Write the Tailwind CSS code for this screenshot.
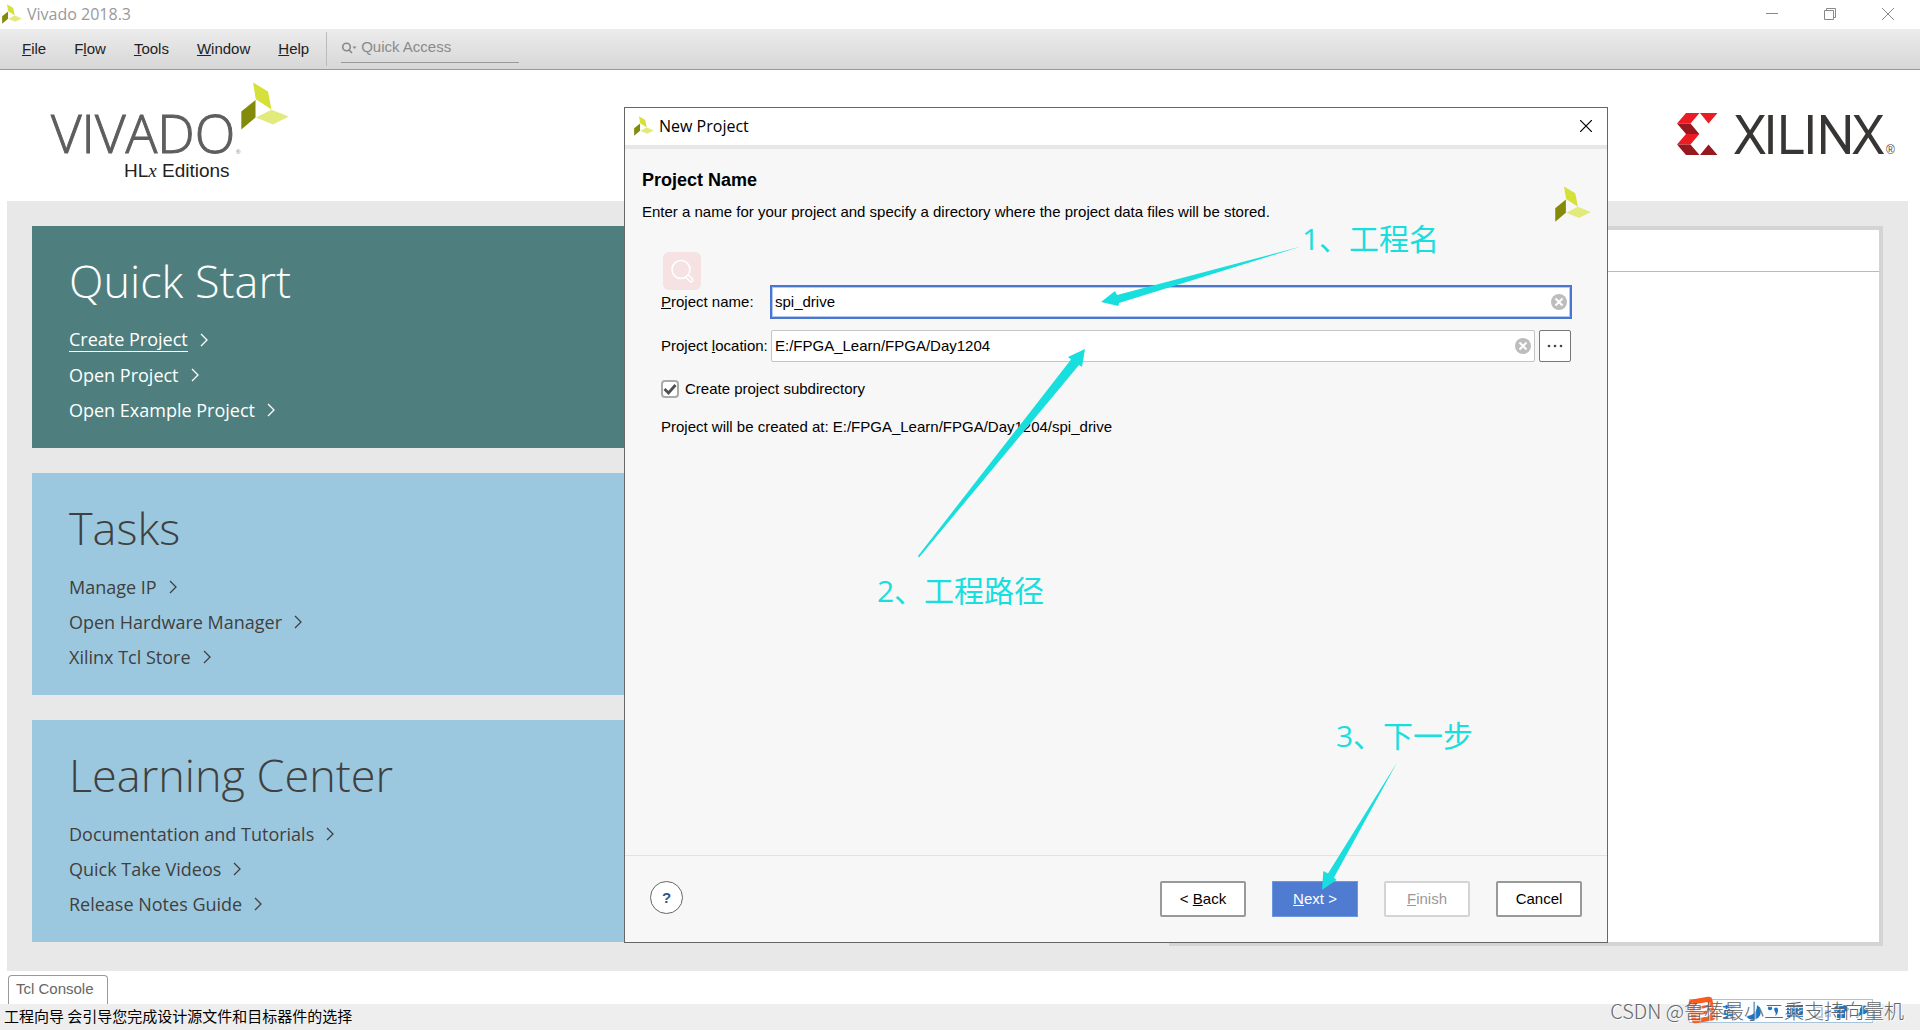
<!DOCTYPE html>
<html lang="en">
<head>
<meta charset="utf-8">
<title>Vivado 2018.3</title>
<script src="https://cdn.jsdelivr.net/npm/@tailwindcss/browser@4"></script>
</head>
<body class="relative flex min-h-screen flex-col overflow-x-hidden bg-white font-['Liberation_Sans','Noto_Sans_CJK_SC',sans-serif] text-[15px] leading-5 text-[#222]">

<svg class="hidden">
  <symbol id="mark" viewBox="0 0 48 48">
    <path fill="#d5e03a" d="M12 0.500 27 9.500 30.500 27.500 14.800 17.300z"/>
    <path fill="#848a0a" d="M0.300 29.500 14.500 18v17.500L0.300 47.500z"/>
    <path fill="#e3ea7c" d="M15 35.500 30.500 27.700 47.800 34.600 32 42.600z"/>
  </symbol>
  <symbol id="chev" viewBox="0 0 8 14"><path d="M1 1l6 6-6 6" fill="none" stroke="currentColor" stroke-width="1.300"/></symbol>
  <symbol id="clear" viewBox="0 0 16 16"><circle cx="8" cy="8" r="8" fill="#bdbdbd"/><path d="M4.500 4.500l7 7M11.500 4.500l-7 7" stroke="#fff" stroke-width="2"/></symbol>
</svg>

<header>
  <div class="flex h-[29px] items-center justify-between pb-px pl-0.5 pr-[26px]">
    <div class="flex items-center gap-[5px] font-['Open_Sans',sans-serif] text-base text-[#999]">
      <svg class="h-5 w-5"><use href="#mark"/></svg>
      <span>Vivado 2018.3</span>
    </div>
    <div class="flex items-center gap-[46px] text-[#888]">
      <button aria-label="Minimize"><svg class="h-3 w-3" viewBox="0 0 12 12" fill="none" stroke="currentColor"><path d="M0 5.500h12"/></svg></button>
      <button aria-label="Restore"><svg class="h-3 w-3" viewBox="0 0 12 12" fill="none" stroke="currentColor"><path d="M.5 2.500h9v9h-9zM2.500 2.500v-2h9v9h-2"/></svg></button>
      <button aria-label="Close"><svg class="h-3 w-3" viewBox="0 0 12 12" fill="none" stroke="currentColor"><path d="M0 0l12 12M12 0L0 12"/></svg></button>
    </div>
  </div>
  <div class="flex h-[41px] items-center border-b border-[#999] bg-linear-to-b from-[#ececec] to-[#d7d7d7] pl-[22px]">
    <nav class="flex gap-7">
      <button><u>F</u>ile</button>
      <button>F<u>l</u>ow</button>
      <button><u>T</u>ools</button>
      <button><u>W</u>indow</button>
      <button><u>H</u>elp</button>
    </nav>
    <div class="ml-[17px] h-[34px] w-px bg-[#bbb]"></div>
    <label class="ml-3.5 flex h-7 w-[178px] items-center gap-1 border-b border-[#999] pb-1">
      <svg class="h-4 w-4" viewBox="0 0 16 16" fill="none" stroke="#888" stroke-width="1.600"><circle cx="5.500" cy="8" r="3.800"/><path d="M8 11l3 3"/><path d="M11.500 7.500h4l-2 2.500z" fill="#888" stroke="none"/></svg>
      <input class="min-w-0 flex-1 bg-transparent outline-none placeholder:text-[#8a8a8a]" placeholder="Quick Access" aria-label="Quick Access">
    </label>
  </div>
</header>

<div class="flex h-[131px] items-start justify-between pl-[50px] pr-[24px]">
  <svg class="mt-2.5 h-[104px] w-60" viewBox="50 80 240 104" role="img" aria-label="Vivado HLx Editions">
    <text x="51" y="153" stroke="#5e5e5e" stroke-width="1" class="fill-[#5e5e5e] font-['Open_Sans',sans-serif] text-[53px] font-light">VIVADO</text>
    <text x="236" y="154" class="fill-[#777] text-[6px]">®</text>
    <text x="124" y="177" class="fill-[#222] text-[19px]">HL<tspan class="font-['Liberation_Serif',serif] italic">x</tspan> Editions</text>
    <use href="#mark" x="241" y="82" width="48" height="48"/>
  </svg>
  <svg class="mt-10 h-12 w-[220px]" viewBox="1676 110 220 48" role="img" aria-label="Xilinx">
    <path fill="#ec1c24" d="M1677 123.500 1686 113h13.500l-9 10.500zM1700 113h17.500l-9 10.500zM1686 134h13.300l-8.800 10.500H1677z"/>
    <path fill="#981820" d="M1677 123.500h13.500l8.800 10.500H1686zM1677 144.500h13.500l9 10.500H1686zM1700 155l8.500-10.500 9 10.500z"/>
    <text x="1736" y="153" stroke="#383634" stroke-width="2" class="fill-[#383634] font-['Open_Sans',sans-serif] text-[52px] font-light">XILINX</text>
    <text x="1886" y="154" class="fill-[#444] text-[12px]">®</text>
  </svg>
</div>

<main class="ml-[7px] mr-3 flex flex-1 gap-[25px] bg-[#e8e8e8] px-[25px] py-[25px]">
  <div class="flex flex-1 flex-col gap-[25px] font-['Open_Sans',sans-serif] text-lg leading-6 text-[#404040]">
    <section class="h-[222px] bg-[#4e7f7e] pl-[37px] pt-[27px] text-white">
      <h2 class="text-[45px] font-light leading-[56px]">Quick Start</h2>
      <ul class="mt-[13px]">
        <li><a href="#" class="flex h-[35px] items-center gap-3"><span class="border-b">Create Project</span><svg class="h-3.5 w-2"><use href="#chev"/></svg></a></li>
        <li><a href="#" class="flex h-[35px] items-center gap-3">Open Project<svg class="h-3.5 w-2"><use href="#chev"/></svg></a></li>
        <li><a href="#" class="flex h-[35px] items-center gap-3">Open Example Project<svg class="h-3.5 w-2"><use href="#chev"/></svg></a></li>
      </ul>
    </section>
    <section class="h-[222px] bg-[#9cc8df] pl-[37px] pt-[27px]">
      <h2 class="text-[45px] font-light leading-[56px]">Tasks</h2>
      <ul class="mt-[13px]">
        <li><a href="#" class="flex h-[35px] items-center gap-3">Manage IP<svg class="h-3.5 w-2"><use href="#chev"/></svg></a></li>
        <li><a href="#" class="flex h-[35px] items-center gap-3">Open Hardware Manager<svg class="h-3.5 w-2"><use href="#chev"/></svg></a></li>
        <li><a href="#" class="flex h-[35px] items-center gap-3">Xilinx Tcl Store<svg class="h-3.5 w-2"><use href="#chev"/></svg></a></li>
      </ul>
    </section>
    <section class="h-[222px] bg-[#9cc8df] pl-[37px] pt-[27px]">
      <h2 class="text-[45px] font-light leading-[56px]">Learning Center</h2>
      <ul class="mt-[13px]">
        <li><a href="#" class="flex h-[35px] items-center gap-3">Documentation and Tutorials<svg class="h-3.5 w-2"><use href="#chev"/></svg></a></li>
        <li><a href="#" class="flex h-[35px] items-center gap-3">Quick Take Videos<svg class="h-3.5 w-2"><use href="#chev"/></svg></a></li>
        <li><a href="#" class="flex h-[35px] items-center gap-3">Release Notes Guide<svg class="h-3.5 w-2"><use href="#chev"/></svg></a></li>
      </ul>
    </section>
  </div>
  <aside class="w-[714px] border-4 border-[#d4d4d4] bg-white">
    <div class="h-[42px] border-b border-[#bbb]"></div>
  </aside>
</main>

<footer>
  <div class="flex h-[33px] items-end pl-2">
    <button class="h-[29px] rounded-t-sm border border-b-0 border-[#999] pb-0.5 pl-[7px] pr-[13px] text-[#666]">Tcl Console</button>
  </div>
  <div class="relative flex h-[26px] items-center bg-[#eee] pb-0.5 pl-1 font-['Noto_Sans_CJK_SC',sans-serif] text-black">
    工程向导 会引导您完成设计源文件和目标器件的选择
    <div class="absolute right-[47px] top-[-5px] h-6 w-[184px]">
      <svg class="h-full w-full overflow-visible" viewBox="0 0 184 24" aria-hidden="true">
        <rect x=".5" y=".5" width="183" height="23" fill="#fbfdfe" stroke="#a9c3d8"/>
        <g transform="rotate(-10 13 11)"><rect x="1" y="-1" width="24" height="24" rx="4" fill="#fa5a1e"/><path d="M20 5.500H9.500a2.500 2.500 0 0 0 0 5.500h7a3 3 0 0 1 0 6H6" fill="none" stroke="#fff" stroke-width="3"/></g>
        <text x="33" y="18" class="fill-[#1c74c4] font-['Noto_Sans_CJK_SC',sans-serif] text-[14px] font-bold">英</text>
        <g fill="#1c74c4">
          <path d="M68 6a8 8 0 1 1-11 11c7 0 11-4 11-11z"/>
          <circle cx="81" cy="9" r="2.200"/><path d="M85 10a2 2 0 0 1 4 1c0 3-1 5-3 6 1-2 1-3 0-4z"/>
          <path fill-rule="evenodd" d="M98 6h16v12H98zM100 8h2v2h-2zM104 8h2v2h-2zM108 8h2v2h-2zM100 12h2v2h-2zM104 12h2v2h-2zM108 12h2v2h-2zM102 15h8v1h-8z"/>
          <path d="M148 6l4 1 4-1 4 4-2 3-2-1v7h-8v-7l-2 1-2-3z"/>
          <path d="M178 7a5 5 0 0 0-7 6l-5 4 2 2 5-4a5 5 0 0 0 6-6l-3 2-1-2z"/>
        </g>
        <path d="M126 8h7v10h-7zM137 12h4v5h-4z" fill="none" stroke="#b5cbe6" stroke-width="2"/>
      </svg>
    </div>
    <div class="absolute right-4 top-[-6px] whitespace-nowrap font-['Noto_Sans_CJK_SC',sans-serif] text-[20px] font-light leading-[26px] text-[#666] [text-shadow:1px_1px_1px_#fff]">CSDN @鲁棒最小二乘支持向量机</div>
  </div>
</footer>

<!-- New Project wizard -->
<div role="dialog" aria-labelledby="dlg" class="absolute left-[624px] top-[107px] flex w-[984px] flex-col border border-[#666] bg-[#f7f7f7] text-black">
  <div class="flex h-[41px] items-center gap-[5px] border-b-4 border-[#e7e7e7] bg-white pb-px pl-[9px] pr-[15px]">
    <svg class="h-5 w-5"><use href="#mark"/></svg>
    <h1 id="dlg" class="flex-1 font-['Open_Sans',sans-serif] text-base">New Project</h1>
    <button aria-label="Close dialog"><svg class="h-3 w-3" viewBox="0 0 12 12" stroke="#000" stroke-width="1.200"><path d="M0 0l12 12M12 0L0 12"/></svg></button>
  </div>
  <div class="flex justify-between pl-[17px] pr-4 pt-[21px]">
    <div>
      <h2 class="text-lg font-bold leading-5">Project Name</h2>
      <p class="mt-3">Enter a name for your project and specify a directory where the project data files will be stored.</p>
    </div>
    <svg class="mt-4 h-9 w-9"><use href="#mark"/></svg>
  </div>
  <div class="flex h-[633px] flex-col pl-9 pr-[35px] pt-[30px]">
    <svg class="ml-0.5 h-[38px] w-[38px] shrink-0" viewBox="0 0 38 38" fill="none"><rect width="38" height="38" rx="6" fill="#f6e2e2"/><circle cx="18" cy="17.500" r="9" stroke="#fff" stroke-width="1.600"/><path d="M25 25l3 3" stroke="#fff" stroke-width="5" stroke-linecap="round"/><path d="M25 25l3 3" stroke="#f6e2e2" stroke-width="2" stroke-linecap="round"/></svg>
    <div class="-mt-[5px] grid grid-cols-[109px_1fr] items-center gap-y-[11px]">
      <label for="pname"><u>P</u>roject name:</label>
      <div class="relative">
        <input id="pname" value="spi_drive" class="block h-[34px] w-full border-2 border-[#4a76cf] bg-white pb-px pl-[3px] outline-none ring-1 ring-inset ring-[#b5c9ef]">
        <button aria-label="Clear name" class="absolute right-[5px] top-[9px]"><svg class="h-4 w-4"><use href="#clear"/></svg></button>
      </div>
      <label for="ploc" class="whitespace-nowrap">Project <u>l</u>ocation:</label>
      <div class="flex gap-1 pl-px pr-px">
        <div class="relative flex-1">
          <input id="ploc" value="E:/FPGA_Learn/FPGA/Day1204" class="block h-8 w-full rounded-xs border border-[#c4c4c4] bg-white pb-px pl-[3px] outline-none">
          <button aria-label="Clear location" class="absolute right-1 top-2"><svg class="h-4 w-4"><use href="#clear"/></svg></button>
        </div>
        <button aria-label="Browse" class="flex h-8 w-8 items-center justify-center rounded-xs border border-[#777] bg-white"><svg class="h-1 w-4" viewBox="0 0 16 4" fill="#444"><circle cx="2" cy="2" r="1.300"/><circle cx="8" cy="2" r="1.300"/><circle cx="14" cy="2" r="1.300"/></svg></button>
      </div>
    </div>
    <label class="mt-[17px] flex items-center gap-1.5">
      <span class="relative flex h-[18px] w-[18px]">
        <input type="checkbox" checked class="h-[18px] w-[18px] appearance-none rounded-sm border-2 border-[#aaa] bg-white">
        <svg class="pointer-events-none absolute inset-0 h-[18px] w-[18px]" viewBox="0 0 18 18" fill="none" stroke="#505050" stroke-width="2.800"><path d="M3.500 9l4 4 7-8"/></svg>
      </span>
      Create project subdirectory
    </label>
    <p class="mt-[18px]">Project will be created at: E:/FPGA_Learn/FPGA/Day1204/spi_drive</p>
  </div>
  <div class="flex h-[87px] items-start border-t border-[#e3e3e3] pl-[25px] pr-[25px] pt-[25px]">
    <button aria-label="Help" class="h-[33px] w-[33px] rounded-full border border-[#666] bg-white font-bold text-[#34528f]">?</button>
    <div class="ml-auto flex gap-[26px]">
      <button class="h-9 w-[86px] rounded-xs border-2 border-[#999] bg-white">&lt; <u>B</u>ack</button>
      <button class="h-9 w-[86px] border border-[#6e97e2] bg-[#4f7bd0] text-white"><u>N</u>ext &gt;</button>
      <button disabled class="h-9 w-[86px] rounded-xs border-2 border-[#d4d4d4] bg-white text-[#999]"><u>F</u>inish</button>
      <button class="h-9 w-[86px] rounded-xs border-2 border-[#999] bg-white">Cancel</button>
    </div>
  </div>

  <!-- Step callouts -->
  <svg class="pointer-events-none absolute -left-px -top-px h-[837px] w-[984px]" viewBox="624 107 984 837" fill="#18dede">
    <path d="M1101 302 1115 291 1117 295 1301 246.500 1119 303 1118.500 306z"/>
    <path d="M1085 349 1068 357 1071 359.500 918 556 919 557.500 1079 365 1082 367z"/>
    <path d="M1322 890 1323.300 871 1328 873.500 1397 762.500 1334 877.500 1336.500 880z"/>
    <g class="font-['Open_Sans','Noto_Sans_CJK_SC',sans-serif] text-[30px]">
      <text x="1302" y="250">1</text><text x="1319" y="250">、工程名</text>
      <text x="877" y="602">2</text><text x="894" y="602">、工程路径</text>
      <text x="1336" y="747">3</text><text x="1353" y="747">、下一步</text>
    </g>
  </svg>
</div>
</body>
</html>
